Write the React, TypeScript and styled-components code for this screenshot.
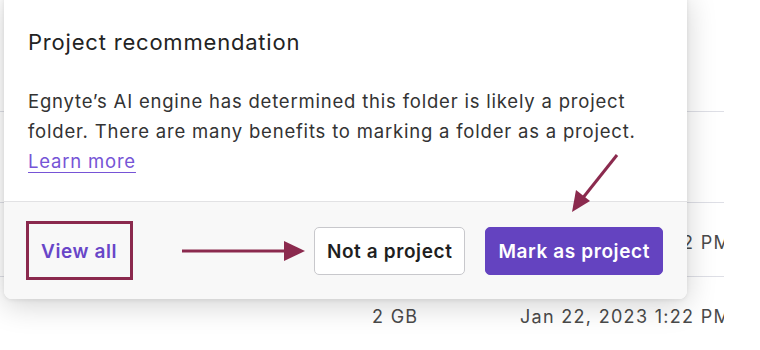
import React from 'react';
import styled, { createGlobalStyle } from 'styled-components';

const ACCENT = '#8b2a4e';
const PURPLE = '#6443c0';

const GlobalStyle = createGlobalStyle`
  html, body {
    margin: 0;
    padding: 0;
    background: #ffffff;
  }
  body {
    font-family: Inter, "Noto Sans", sans-serif;
    -webkit-font-smoothing: antialiased;
  }
`;

const Scene = styled.div`
  position: relative;
  width: 724px;
  height: 350px;
  overflow: hidden;
  background: #ffffff;
`;

const Row = styled.div<{ height: number }>`
  display: grid;
  grid-template-columns: 372px 148px 1fr;
  align-items: center;
  height: ${({ height }) => height}px;
  box-sizing: border-box;
  border-bottom: 1px solid #dedfe6;
  color: #4a4a4a;
  font-size: 18px;
  letter-spacing: 1.3px;
  white-space: nowrap;
`;

const Cell = styled.div<{ column: number }>`
  grid-column: ${({ column }) => column};
  padding-top: 6px;
`;

const Popover = styled.section`
  position: absolute;
  top: -8px;
  left: 4px;
  width: 683px;
  border-radius: 8px;
  background: #ffffff;
  overflow: hidden;
  box-shadow: 0 6px 30px rgba(0, 0, 0, 0.18), 0 1px 4px rgba(0, 0, 0, 0.08);
`;

const Body = styled.div`
  padding: 36px 24px 25px;
`;

const Title = styled.h2`
  margin: 0;
  font-size: 22px;
  line-height: 28px;
  font-weight: 400;
  letter-spacing: 0.8px;
  color: #232323;
`;

const Text = styled.p`
  margin: 30px 0 0;
  font-size: 18.5px;
  line-height: 30px;
  letter-spacing: 0.8px;
  color: #333333;
`;

const LearnMore = styled.a`
  color: #7654d6;
  text-decoration: underline;
  text-underline-offset: 4px;
  text-decoration-thickness: 1px;
  cursor: pointer;
`;

const Footer = styled.footer`
  display: flex;
  align-items: center;
  justify-content: space-between;
  padding: 25px 24px 24px;
  border-top: 1px solid #e2e2e4;
  background: #f8f8f8;
`;

const Actions = styled.div`
  display: flex;
  gap: 20px;
`;

const Button = styled.button<{ variant: 'ghost' | 'outline' | 'primary' }>`
  height: 48px;
  padding: 0 12px;
  border-radius: 5px;
  font-family: inherit;
  font-size: 19px;
  font-weight: 600;
  letter-spacing: 0.6px;
  cursor: pointer;
  border: 1px solid
    ${({ variant }) =>
      variant === 'outline' ? '#c8c8cc' : variant === 'primary' ? PURPLE : 'transparent'};
  background: ${({ variant }) =>
    variant === 'outline' ? '#ffffff' : variant === 'primary' ? PURPLE : 'transparent'};
  color: ${({ variant }) =>
    variant === 'outline' ? '#1f1f1f' : variant === 'primary' ? '#ffffff' : '#6846c8'};
`;

const Annotations = styled.svg`
  position: absolute;
  inset: 0;
  pointer-events: none;
`;

const App: React.FC = () => {
  return (
    <>
      <GlobalStyle />
      <Scene>
        <Row height={112} />
        <Row height={91} />
        <Row height={74}>
          <Cell column={2}>2 GB</Cell>
          <Cell column={3}>Jan 22, 2023 1:22 PM</Cell>
        </Row>
        <Row height={74}>
          <Cell column={2}>2 GB</Cell>
          <Cell column={3}>Jan 22, 2023 1:22 PM</Cell>
        </Row>

        <Popover>
          <Body>
            <Title>Project recommendation</Title>
            <Text>
              Egnyte’s AI engine has determined this folder is likely a project folder. There are
              many benefits to marking a folder as a project. <br />
              <LearnMore>Learn more</LearnMore>
            </Text>
          </Body>
          <Footer>
            <Button variant="ghost">View all</Button>
            <Actions>
              <Button variant="outline">Not a project</Button>
              <Button variant="primary">Mark as project</Button>
            </Actions>
          </Footer>
        </Popover>

        <Annotations width="724" height="350" viewBox="0 0 724 350">
          <rect x="27.5" y="222.5" width="104" height="56" fill="none" stroke={ACCENT} strokeWidth="3" />
          <line x1="182" y1="251" x2="290" y2="251" stroke={ACCENT} strokeWidth="3" />
          <polygon points="284,241 305,251 284,261" fill={ACCENT} />
          <line x1="617" y1="155" x2="582" y2="199" stroke={ACCENT} strokeWidth="3" />
          <polygon points="572,212 576,190 590,201" fill={ACCENT} />
        </Annotations>
      </Scene>
    </>
  );
};

export default App;
